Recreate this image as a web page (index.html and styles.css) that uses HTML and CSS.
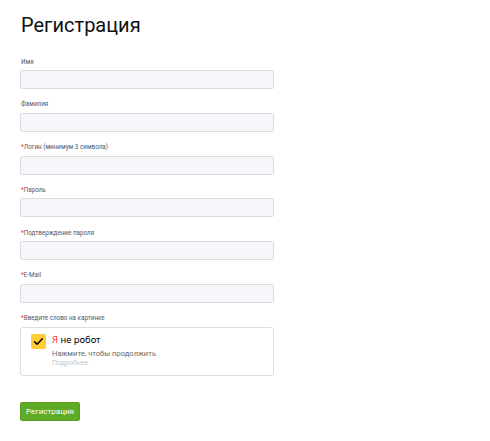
FILE: index.html
```html
<!DOCTYPE html>
<html lang="ru">
<head>
<meta charset="utf-8">
<title>Регистрация</title>
<link rel="stylesheet" href="styles.css">
</head>
<body>
<main class="page">
  <h1 class="title">Регистрация</h1>
  <form class="form">
    <div class="field">
      <label class="label">Имя</label>
      <input class="input" type="text">
    </div>
    <div class="field">
      <label class="label">Фамилия</label>
      <input class="input" type="text">
    </div>
    <div class="field">
      <label class="label"><span class="req">*</span>Логин (минимум 3 символа)</label>
      <input class="input" type="text">
    </div>
    <div class="field">
      <label class="label"><span class="req">*</span>Пароль</label>
      <input class="input" type="password">
    </div>
    <div class="field">
      <label class="label"><span class="req">*</span>Подтверждение пароля</label>
      <input class="input" type="password">
    </div>
    <div class="field">
      <label class="label"><span class="req">*</span>E-Mail</label>
      <input class="input" type="email">
    </div>
    <div class="field">
      <label class="label"><span class="req">*</span>Введите слово на картинке</label>
      <div class="captcha">
        <span class="check">
          <svg viewBox="0 0 16 16" width="11" height="11"><path d="M2.5 8.5 L6 12 L13.5 4" fill="none" stroke="#000" stroke-width="2.2" stroke-linecap="round" stroke-linejoin="round"/></svg>
        </span>
        <div class="captcha-text">
          <div class="captcha-title"><span class="ya">Я</span> не робот</div>
          <div class="captcha-hint">Нажмите, чтобы продолжить</div>
          <div class="captcha-more">Подробнее</div>
        </div>
      </div>
    </div>
    <button class="submit" type="button">Регистрация</button>
  </form>
</main>
</body>
</html>
```

FILE: styles.css
```css
html, body {
  margin: 0;
  background: #fff;
}

.page {
  padding: 11px 20px 0 20px;
  font-family: Roboto, "Liberation Sans", Arial, sans-serif;
}

.title {
  margin: 0 0 0 1px;
  font-size: 20px;
  font-weight: 400;
  line-height: 28px;
  color: #111;
}

.form {
  margin-top: 18.5px;
  width: 254px;
  display: flex;
  flex-direction: column;
  gap: 11.25px;
}

.field {
  display: flex;
  flex-direction: column;
  gap: 4.5px;
}

.label {
  font-size: 6.3px;
  line-height: 8px;
  color: #4b5a6e;
  margin-left: 1px;
}

.req {
  color: #d33;
}

.input {
  box-sizing: border-box;
  height: 19px;
  width: 254px;
  margin: 0;
  border: 1px solid #dcdde0;
  border-radius: 2px;
  background: #f6f6fb;
}

.captcha {
  box-sizing: border-box;
  height: 49px;
  border: 1px solid #dedede;
  border-radius: 3px;
  display: flex;
  align-items: flex-start;
  padding: 6px 0 0 10px;
  gap: 6px;
}

.check {
  flex: none;
  width: 15px;
  height: 15px;
  border-radius: 2px;
  background: #fc3;
  display: flex;
  align-items: center;
  justify-content: center;
}

.captcha-text {
  display: flex;
  flex-direction: column;
}

.captcha-title {
  font-family: "Noto Sans", Roboto, sans-serif;
  font-size: 9.4px;
  font-weight: 400;
  line-height: 12px;
  color: #000;
}

.ya {
  color: #f33;
}

.captcha-hint {
  margin-top: 3.3px;
  font-size: 7.6px;
  line-height: 10px;
  color: #6b6b6b;
}

.captcha-more {
  margin-top: 0.7px;
  font-size: 7px;
  line-height: 8px;
  color: #c7c7c7;
}

.submit {
  align-self: flex-start;
  margin-top: 15px;
  height: 19px;
  width: 60px;
  padding: 0;
  border: 1px solid #5a9e22;
  border-radius: 2px;
  background: #5faa26;
  color: #fff;
  font-family: Roboto, "Liberation Sans", Arial, sans-serif;
  font-size: 8px;
}
```
